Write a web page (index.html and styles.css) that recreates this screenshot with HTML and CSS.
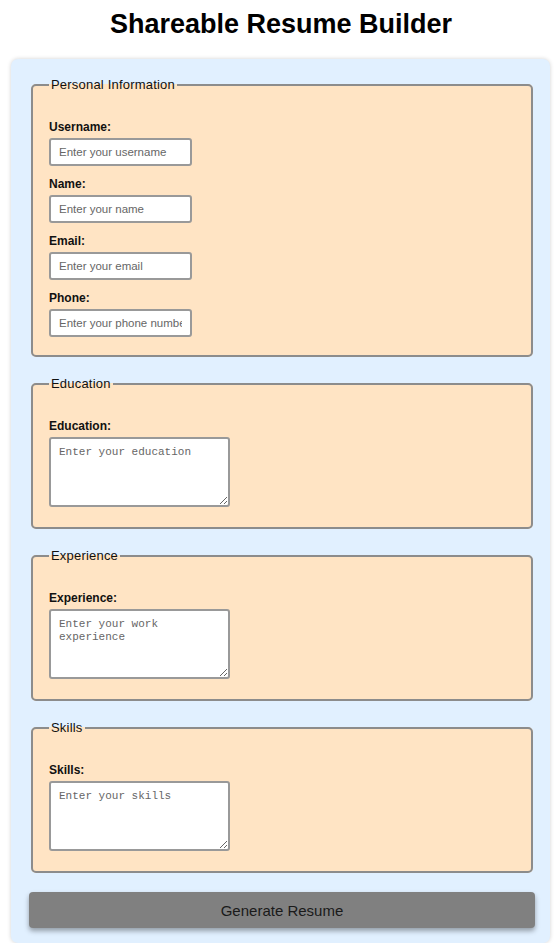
FILE: index.html
```html
<!DOCTYPE html>
<html lang="en">
<head>
<meta charset="utf-8">
<title>Shareable Resume Builder</title>
<link rel="stylesheet" href="styles.css">
</head>
<body>
<h1 class="title">Shareable Resume Builder</h1>
<form class="builder">
  <fieldset class="section">
    <legend class="section-title">Personal Information</legend>
    <label class="field-label" for="username">Username:</label>
    <input class="text-input" id="username" type="text" placeholder="Enter your username">
    <label class="field-label" for="name">Name:</label>
    <input class="text-input" id="name" type="text" placeholder="Enter your name">
    <label class="field-label" for="email">Email:</label>
    <input class="text-input" id="email" type="email" placeholder="Enter your email">
    <label class="field-label" for="phone">Phone:</label>
    <input class="text-input" id="phone" type="tel" placeholder="Enter your phone number">
  </fieldset>
  <fieldset class="section">
    <legend class="section-title">Education</legend>
    <label class="field-label" for="education">Education:</label>
    <textarea class="text-area" id="education" placeholder="Enter your education"></textarea>
  </fieldset>
  <fieldset class="section">
    <legend class="section-title">Experience</legend>
    <label class="field-label" for="experience">Experience:</label>
    <textarea class="text-area" id="experience" placeholder="Enter your work experience"></textarea>
  </fieldset>
  <fieldset class="section">
    <legend class="section-title">Skills</legend>
    <label class="field-label" for="skills">Skills:</label>
    <textarea class="text-area" id="skills" placeholder="Enter your skills"></textarea>
  </fieldset>
  <button class="generate" type="button">Generate Resume</button>
</form>
</body>
</html>
```
FILE: styles.css
```css
* { box-sizing: border-box; }

body {
  margin: 0;
  background: #ffffff;
  font-family: "Liberation Sans", Arial, sans-serif;
  color: #111;
}

.title {
  margin: 9px 0 19px;
  text-align: center;
  font-size: 27px;
  font-weight: bold;
  line-height: 31px;
  color: #000;
  padding-left: 6px;
}

.builder {
  margin-left: 11px;
  width: 539px;
  padding: 18px 15px 15px 18px;
  background: #e1f0ff;
  border-radius: 7px;
  box-shadow: 0 0 4px rgba(0, 0, 0, 0.18);
}

.section {
  margin: 0 2px 19px;
  padding: 27px 16px 7px;
  background: #ffe4c4;
  border: 2px solid #8c8c8c;
  border-radius: 5px;
}

.section-title {
  padding: 0 2px;
  font-size: 13px;
  line-height: 16px;
  color: #111;
  letter-spacing: 0.2px;
}

.field-label {
  display: block;
  margin-bottom: 4px;
  font-size: 12px;
  font-weight: bold;
  line-height: 14px;
  color: #111;
}

.text-input {
  display: block;
  width: 143px;
  height: 28px;
  margin: 0 0 11px;
  padding: 0 8px;
  border: 2px solid #999;
  border-radius: 3px;
  background: #fff;
  font-family: "Liberation Sans", Arial, sans-serif;
  font-size: 11.5px;
  color: #222;
}

.text-input::placeholder { color: #666; }

.text-area {
  display: block;
  width: 181px;
  height: 70px;
  margin: 0 0 13px;
  padding: 7px 8px;
  border: 2px solid #999;
  border-radius: 3px;
  background: #fff;
  font-family: "Liberation Mono", "Courier New", monospace;
  font-size: 11px;
  line-height: 13px;
  color: #222;
}

.text-area::placeholder { color: #666; }

.generate {
  display: block;
  width: 100%;
  height: 36px;
  margin: 0;
  border: none;
  border-radius: 4px;
  background: #808080;
  color: #1a1a1a;
  font-family: "Liberation Sans", Arial, sans-serif;
  font-size: 15px;
  box-shadow: 0 3px 5px rgba(0, 0, 0, 0.35);
  cursor: pointer;
}
```
